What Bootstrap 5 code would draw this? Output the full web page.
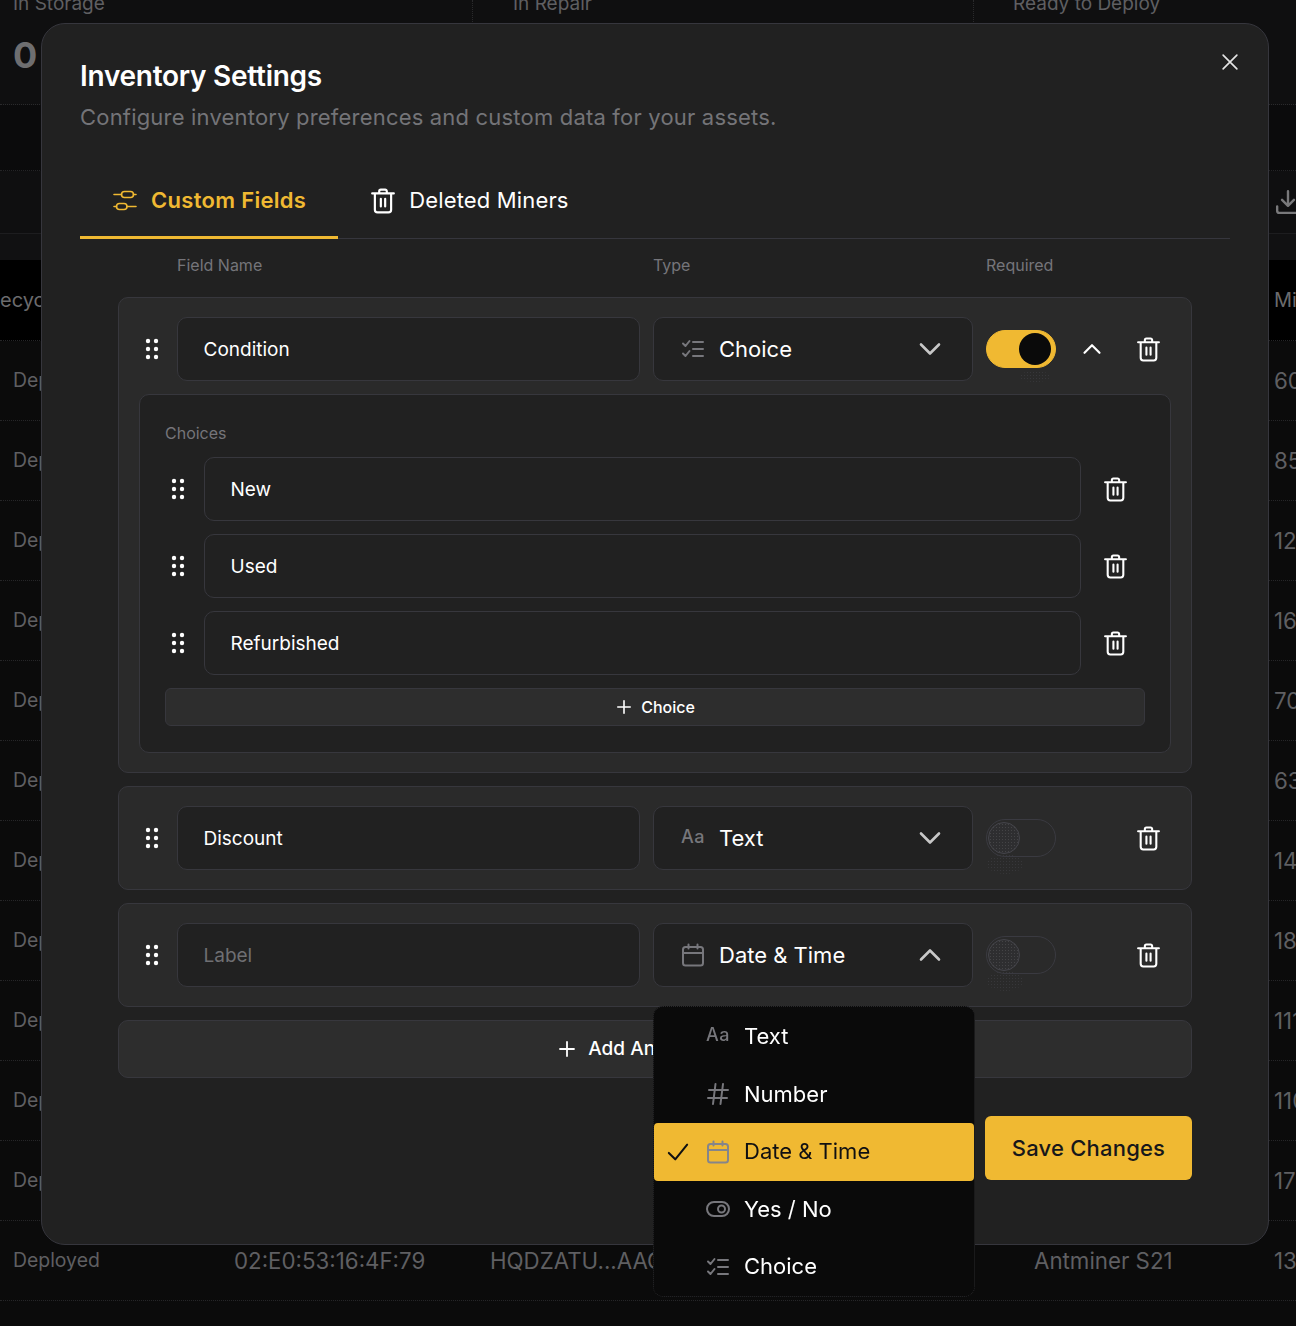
<!DOCTYPE html>
<html lang="en">
<head>
  <meta charset="UTF-8">
  <meta name="viewport" content="width=device-width, initial-scale=1.0">
  <title>Inventory Settings</title>
  <link href="https://cdn.jsdelivr.net/npm/bootstrap@5.3.3/dist/css/bootstrap.min.css" rel="stylesheet">
  <style>
    html, body { height: 100%; }
    body { background: #0b0b0b; font-family: Inter, "Liberation Sans", sans-serif; color: #5f5f62; overflow: hidden; }

    /* page behind the modal */
    .stat-strip { height: 105px; display: flex; background: #0f0f10; border-bottom: 1px dotted #2a2a2c; overflow: hidden; }
    .stat-box { flex: none; width: 473px; padding-left: 13px; border-right: 1px dotted #2a2a2c; margin-right: 13px; }
    .stat-box:nth-child(2) { width: 488px; padding-left: 27px; }
    .stat-box:nth-child(3) { padding-left: 26px; border-right: 0; }
    .stat-name { font-size: 19px; line-height: 22px; margin-top: -7px; }
    .stat-num { font-size: 36px; font-weight: 700; line-height: 44px; margin-top: 18px; color: #6e6e70; }
    .band-a { height: 66px; background: #0b0b0c; border-bottom: 1px dotted #242426; }
    .band-b { height: 63px; display: flex; justify-content: flex-end; align-items: center; background: #0f0f10; border-bottom: 1px solid #1d1d1f; }
    .band-b svg { width: 26px; height: 26px; margin-right: -5px; color: #79797b; }
    .band-c { height: 26px; background: #111112; }
    .grid-row { display: grid; grid-template-columns: 221px 256px 544px 240px 35px; padding-left: 13px; height: 80px; align-items: center; font-size: 22.300px; white-space: nowrap; border-bottom: 1px dotted #262628; }
    .grid-row > div { overflow: hidden; }
    .grid-row > div:first-child { font-size: 19.400px; }
    .grid-head { background: #000; color: #6b6b6d; padding-left: 0; height: 81px; font-size: 20px; grid-template-columns: 234px 256px 544px 240px 22px; }
    .grid-head > div:first-child { font-size: 20px; }

    /* modal */
    .modal-dialog.inv-dialog { max-width: none; width: 1228px; margin: 23px 0 0 41px; }
    .inv-content { background: #212121; border: 1px solid #36363d; border-radius: 24px; padding: 35px 38px 64px; color: #fff; }
    .inv-close { top: 23px; right: 26px; width: 24px; height: 24px; color: #e4e4e4; }
    .inv-title { font-size: 28px; font-weight: 600; line-height: 34px; letter-spacing: -.27px; margin: 0 0 10px; }
    .inv-sub { font-size: 22px; line-height: 28px; color: #747478; letter-spacing: .19px; margin: 0; }

    .inv-tabs { margin-top: 32px; border-bottom: 1px solid #36363d; }
    .inv-tabs .nav-link { display: flex; align-items: center; gap: 13px; height: 76px; margin: 0; padding: 2px 32px 0; border: 0; border-bottom: 3px solid transparent; border-radius: 0; background: none; color: #fff; font-size: 22px; letter-spacing: .15px; margin-bottom: -1px; }
    .inv-tabs .nav-link.active { background: none; color: #f0b932; font-weight: 600; letter-spacing: .3px; border-bottom-color: #f0b932; }
    .inv-tabs .nav-link svg { width: 26px; height: 26px; }

    .col-labels { display: flex; margin: 16px 0 22px 97px; font-size: 16px; line-height: 20px; color: #75757a; }
    .col-labels span:nth-child(1) { width: 476px; }
    .col-labels span:nth-child(2) { width: 333px; }

    .field-box { margin: 0 38px 13px; padding: 19px 20px; background: #2a2a2a; border: 1px solid #37373d; border-radius: 10px; }
    .grip { flex: none; width: 26px; color: #fff; display: flex; justify-content: center; }
    .grip svg { width: 14px; height: 22px; }
    .inv-input.form-control { height: 64px; padding: 0 25.500px; background: #212121; border: 1px solid #37373d; border-radius: 10px; color: #fff; font-size: 19px; box-shadow: none; }
    .inv-input.form-control::placeholder { color: #6f6f73; }
    .name-input.form-control { width: 463px; flex: none; margin-left: 12px; }
    .type-wrap { position: relative; flex: none; width: 320px; margin: 0 13px; }
    .type-select.btn { width: 100%; height: 64px; display: flex; align-items: center; gap: 14px; padding: 0 30px 0 27px; background: #212121; border: 1px solid #37373d; border-radius: 10px; color: #fff; font-size: 22px; text-align: left; }
    .type-select .chev { margin-left: auto; width: 24px; height: 24px; color: #c8c8c8; }
    .type-ic { flex: none; width: 24px; height: 24px; color: #77777c; display: flex; align-items: center; }
    .type-ic svg { width: 24px; height: 24px; }
    .aa-ic { font-size: 18px; font-weight: 500; letter-spacing: .5px; line-height: 1; padding-bottom: 3px; white-space: nowrap; }

    .inv-switch { position: relative; flex: none; width: 70px; height: 38px; border: 1px solid #3a3a41; border-radius: 19px; }
    .inv-switch::before { content: ""; position: absolute; left: 1px; top: 2px; width: 32px; height: 32px; border-radius: 50%; border: 1px solid #45454b; background-color: #2e2e30; background-image: radial-gradient(#444446 .6px, transparent .8px); background-size: 3px 3px; }
    .inv-switch::after { content: ""; position: absolute; left: 0; top: 34px; width: 36px; height: 20px; border-radius: 50%; background-image: radial-gradient(#37373a .6px, transparent .8px); background-size: 3px 3px; }
    .inv-switch.is-on { background: #f0b932; border-color: #f0b932; }
    .inv-switch.is-on::before { left: 32px; border: 0; background: #0a0a0a; }
    .inv-switch.is-on::after { left: 33px; top: 40px; width: 30px; height: 11px; }

    .field-acts { flex: 1; display: flex; justify-content: flex-end; align-items: center; gap: 17px; padding-right: 2.500px; }
    .ic-btn { width: 40px; height: 40px; display: flex; align-items: center; justify-content: center; color: #fff; flex: none; }
    .ic-btn svg { width: 25px; height: 25px; }
    .ic-btn .up { width: 20px; height: 20px; }

    .choice-panel { margin-top: 13px; padding: 28px 25px 26px; background: #212121; border: 1px solid #37373d; border-radius: 10px; }
    .choice-title { font-size: 16px; line-height: 20px; color: #75757a; margin-bottom: 14px; }
    .choice-row { display: flex; align-items: center; margin-bottom: 13px; }
    .choice-row .inv-input { flex: 1; margin-left: 13px; }
    .choice-row .ic-btn { margin: 0 9.500px 0 14.500px; }
    .add-choice.btn { width: 100%; height: 38px; display: flex; align-items: center; justify-content: center; gap: 9px; padding: 0 0 0 1px; background: #2d2d2d; border: 1px solid #37373d; border-radius: 6px; color: #fff; font-size: 16px; font-weight: 500; }
    .add-choice svg { width: 16px; height: 16px; }
    .add-field.btn { display: flex; align-items: center; justify-content: center; gap: 12px; height: 58px; width: 1074px; margin: 0 38px; padding: 0; background: #2d2d2d; border: 1px solid #37373d; border-radius: 10px; color: #fff; font-size: 19px; font-weight: 500; }
    .add-field svg { width: 18px; height: 18px; }
    .save-btn.btn { width: 207px; height: 64px; margin: 38px 38px 0 0; padding: 0; background: #f0b932; border: 0; border-radius: 6px; color: #17171a; font-size: 22px; font-weight: 500; letter-spacing: .2px; }

    .type-menu.dropdown-menu { top: 83px; left: 0; width: 322px; padding: 1px 0 0; background: #0a0a0a; border: 1px dotted #2a2a2c; border-radius: 10px; z-index: 5; }
    .type-menu .dropdown-item { position: relative; height: 57.5px; display: flex; align-items: center; gap: 14px; padding: 0 0 0 52px; background: none; color: #fff; font-size: 22px; }
    .type-menu .dropdown-item.active { background: #f0b932; color: #101012; border-radius: 4px; }
    .type-menu .dropdown-item.active .type-ic { color: #85858a; }
    .tick { position: absolute; left: 13px; top: 18px; width: 22px; height: 22px; }
  </style>
</head>
<body>
  <svg class="d-none">
    <symbol id="i-trash" viewBox="0 0 24 24" fill="none" stroke="currentColor" stroke-width="2" stroke-linecap="round" stroke-linejoin="round">
      <path d="M8.5 4.5V3a1.5 1.5 0 0 1 1.5-1.5h4A1.5 1.5 0 0 1 15.500 3v1.500M2 5h20M4.500 5v15a2.500 2.500 0 0 0 2.500 2.500h10a2.500 2.500 0 0 0 2.500-2.500V5M10 10v7M14 10v7"/>
    </symbol>
    <symbol id="i-grip" viewBox="0 0 14 22" fill="currentColor">
      <circle cx="3" cy="3" r="2.200"/><circle cx="11" cy="3" r="2.200"/>
      <circle cx="3" cy="11" r="2.200"/><circle cx="11" cy="11" r="2.200"/>
      <circle cx="3" cy="19" r="2.200"/><circle cx="11" cy="19" r="2.200"/>
    </symbol>
    <symbol id="i-down" viewBox="0 0 24 24" fill="none" stroke="currentColor" stroke-width="2.600" stroke-linecap="round" stroke-linejoin="round"><path d="M3 7.500 12 16.500l9-9"/></symbol>
    <symbol id="i-up" viewBox="0 0 24 24" fill="none" stroke="currentColor" stroke-width="2.600" stroke-linecap="round" stroke-linejoin="round"><path d="M3 16.500 12 7.500l9 9"/></symbol>
    <symbol id="i-list" viewBox="0 0 24 24" fill="none" stroke="currentColor" stroke-width="2" stroke-linecap="round" stroke-linejoin="round"><path d="m2 6.500 2.500 2.500 4-5M2 16.500 4.500 19l4-5M12 5h10M12 12h10M12 19h10"/></symbol>
    <symbol id="i-cal" viewBox="0 0 24 24" fill="none" stroke="currentColor" stroke-width="2" stroke-linecap="round" stroke-linejoin="round"><rect x="2" y="4" width="20" height="18.500" rx="2.500"/><path d="M2 10h20M7.500 1.500v4M16.500 1.500v4"/></symbol>
    <symbol id="i-hash" viewBox="0 0 24 24" fill="none" stroke="currentColor" stroke-width="2" stroke-linecap="round"><path d="M9.500 2 7 22M17 2l-2.500 20M3 8h19M2 16h19"/></symbol>
    <symbol id="i-eye" viewBox="0 0 24 24" fill="none" stroke="currentColor" stroke-width="2"><rect x="1" y="5" width="22" height="14" rx="7"/><circle cx="15.500" cy="12" r="3.500"/></symbol>
    <symbol id="i-plus" viewBox="0 0 18 18" fill="none" stroke="currentColor" stroke-width="1.800" stroke-linecap="round"><path d="M9 2v14M2 9h14"/></symbol>
    <symbol id="i-fields" viewBox="0 0 26 26" fill="none" stroke="currentColor" stroke-width="1.600" stroke-linecap="round"><rect x="9.500" y="3.500" width="12" height="6" rx="3"/><rect x="4.500" y="15.500" width="10.500" height="6" rx="3"/><path d="M2 6.500h7.500M21.500 6.500H24M2 18.500h2.500M15 18.500h9"/></symbol>
  </svg>

  <!-- page behind -->
  <div class="stat-strip">
    <div class="stat-box"><div class="stat-name">In Storage</div><div class="stat-num">0</div></div>
    <div class="stat-box"><div class="stat-name">In Repair</div></div>
    <div class="stat-box"><div class="stat-name">Ready to Deploy</div></div>
  </div>
  <div class="band-a"></div>
  <div class="band-b">
    <svg viewBox="0 0 24 24" fill="none" stroke="currentColor" stroke-width="2.200" stroke-linecap="round" stroke-linejoin="round"><path d="M12 2v13M6.500 10l5.500 5.500 5.500-5.500M2 16v4a2 2 0 0 0 2 2h16a2 2 0 0 0 2-2v-4"/></svg>
  </div>
  <div class="band-c"></div>
  <div class="grid-row grid-head"><div>ecycle</div><div>MAC Address</div><div>Serial Number</div><div>Model</div><div>Mi</div></div>
  <div id="minerRows"></div>

  <!-- settings modal -->
  <div class="modal d-block" tabindex="-1">
    <div class="modal-dialog inv-dialog">
      <div class="modal-content inv-content">
        <button type="button" class="btn p-0 position-absolute inv-close" aria-label="Close">
          <svg viewBox="0 0 24 24" fill="none" stroke="currentColor" stroke-width="1.800" stroke-linecap="round"><path d="M4.500 4.500l15 15M19.500 4.500l-15 15"/></svg>
        </button>
        <h1 class="inv-title">Inventory Settings</h1>
        <p class="inv-sub">Configure inventory preferences and custom data for your assets.</p>

        <ul class="nav nav-tabs inv-tabs">
          <li class="nav-item"><a class="nav-link active" href="#"><svg><use href="#i-fields"/></svg>Custom Fields</a></li>
          <li class="nav-item"><a class="nav-link" href="#"><svg><use href="#i-trash"/></svg>Deleted Miners</a></li>
        </ul>

        <div class="col-labels"><span>Field Name</span><span>Type</span><span>Required</span></div>

        <div class="field-box">
          <div class="d-flex align-items-center">
            <span class="grip"><svg><use href="#i-grip"/></svg></span>
            <input class="form-control inv-input name-input" value="Condition">
            <div class="type-wrap">
              <button type="button" class="btn type-select">
                <span class="type-ic"><svg><use href="#i-list"/></svg></span>Choice
                <svg class="chev"><use href="#i-down"/></svg>
              </button>
            </div>
            <span class="inv-switch is-on"></span>
            <div class="field-acts">
              <span class="ic-btn"><svg class="up"><use href="#i-up"/></svg></span>
              <span class="ic-btn"><svg><use href="#i-trash"/></svg></span>
            </div>
          </div>
          <div class="choice-panel">
            <div class="choice-title">Choices</div>
            <div class="choice-row">
              <span class="grip"><svg><use href="#i-grip"/></svg></span>
              <input class="form-control inv-input" value="New">
              <span class="ic-btn"><svg><use href="#i-trash"/></svg></span>
            </div>
            <div class="choice-row">
              <span class="grip"><svg><use href="#i-grip"/></svg></span>
              <input class="form-control inv-input" value="Used">
              <span class="ic-btn"><svg><use href="#i-trash"/></svg></span>
            </div>
            <div class="choice-row">
              <span class="grip"><svg><use href="#i-grip"/></svg></span>
              <input class="form-control inv-input" value="Refurbished">
              <span class="ic-btn"><svg><use href="#i-trash"/></svg></span>
            </div>
            <button type="button" class="btn add-choice"><svg><use href="#i-plus"/></svg>Choice</button>
          </div>
        </div>

        <div class="field-box">
          <div class="d-flex align-items-center">
            <span class="grip"><svg><use href="#i-grip"/></svg></span>
            <input class="form-control inv-input name-input" value="Discount">
            <div class="type-wrap">
              <button type="button" class="btn type-select">
                <span class="type-ic aa-ic">Aa</span>Text
                <svg class="chev"><use href="#i-down"/></svg>
              </button>
            </div>
            <span class="inv-switch"></span>
            <div class="field-acts"><span class="ic-btn"><svg><use href="#i-trash"/></svg></span></div>
          </div>
        </div>

        <div class="field-box">
          <div class="d-flex align-items-center">
            <span class="grip"><svg><use href="#i-grip"/></svg></span>
            <input class="form-control inv-input name-input" placeholder="Label">
            <div class="type-wrap">
              <button type="button" class="btn type-select">
                <span class="type-ic"><svg><use href="#i-cal"/></svg></span>Date &amp; Time
                <svg class="chev"><use href="#i-up"/></svg>
              </button>
              <ul class="dropdown-menu show type-menu">
                <li><a class="dropdown-item" href="#"><span class="type-ic aa-ic">Aa</span>Text</a></li>
                <li><a class="dropdown-item" href="#"><span class="type-ic"><svg><use href="#i-hash"/></svg></span>Number</a></li>
                <li><a class="dropdown-item active" href="#">
                  <svg class="tick" viewBox="0 0 24 24" fill="none" stroke="currentColor" stroke-width="2.200" stroke-linecap="round" stroke-linejoin="round"><path d="M2 13l7 7L22 4"/></svg>
                  <span class="type-ic"><svg><use href="#i-cal"/></svg></span>Date &amp; Time</a></li>
                <li><a class="dropdown-item" href="#"><span class="type-ic"><svg><use href="#i-eye"/></svg></span>Yes / No</a></li>
                <li><a class="dropdown-item" href="#"><span class="type-ic"><svg><use href="#i-list"/></svg></span>Choice</a></li>
              </ul>
            </div>
            <span class="inv-switch"></span>
            <div class="field-acts"><span class="ic-btn"><svg><use href="#i-trash"/></svg></span></div>
          </div>
        </div>

        <button type="button" class="btn add-field"><svg><use href="#i-plus"/></svg>Add Another Field</button>

        <div class="d-flex justify-content-end">
          <button type="button" class="btn save-btn">Save Changes</button>
        </div>
      </div>
    </div>
  </div>

  <script>
    const counts = ["60", "85", "12", "16", "70", "63", "14", "18", "111", "110", "17", "13"];
    document.getElementById("minerRows").innerHTML = counts.map(n => `
      <div class="grid-row">
        <div>Deployed</div>
        <div>02:E0:53:16:4F:79</div>
        <div>HQDZATU...AAC</div>
        <div>Antminer S21</div>
        <div>${n}</div>
      </div>`).join("");
  </script>
  <script src="https://cdn.jsdelivr.net/npm/bootstrap@5.3.3/dist/js/bootstrap.bundle.min.js"></script>
</body>
</html>
